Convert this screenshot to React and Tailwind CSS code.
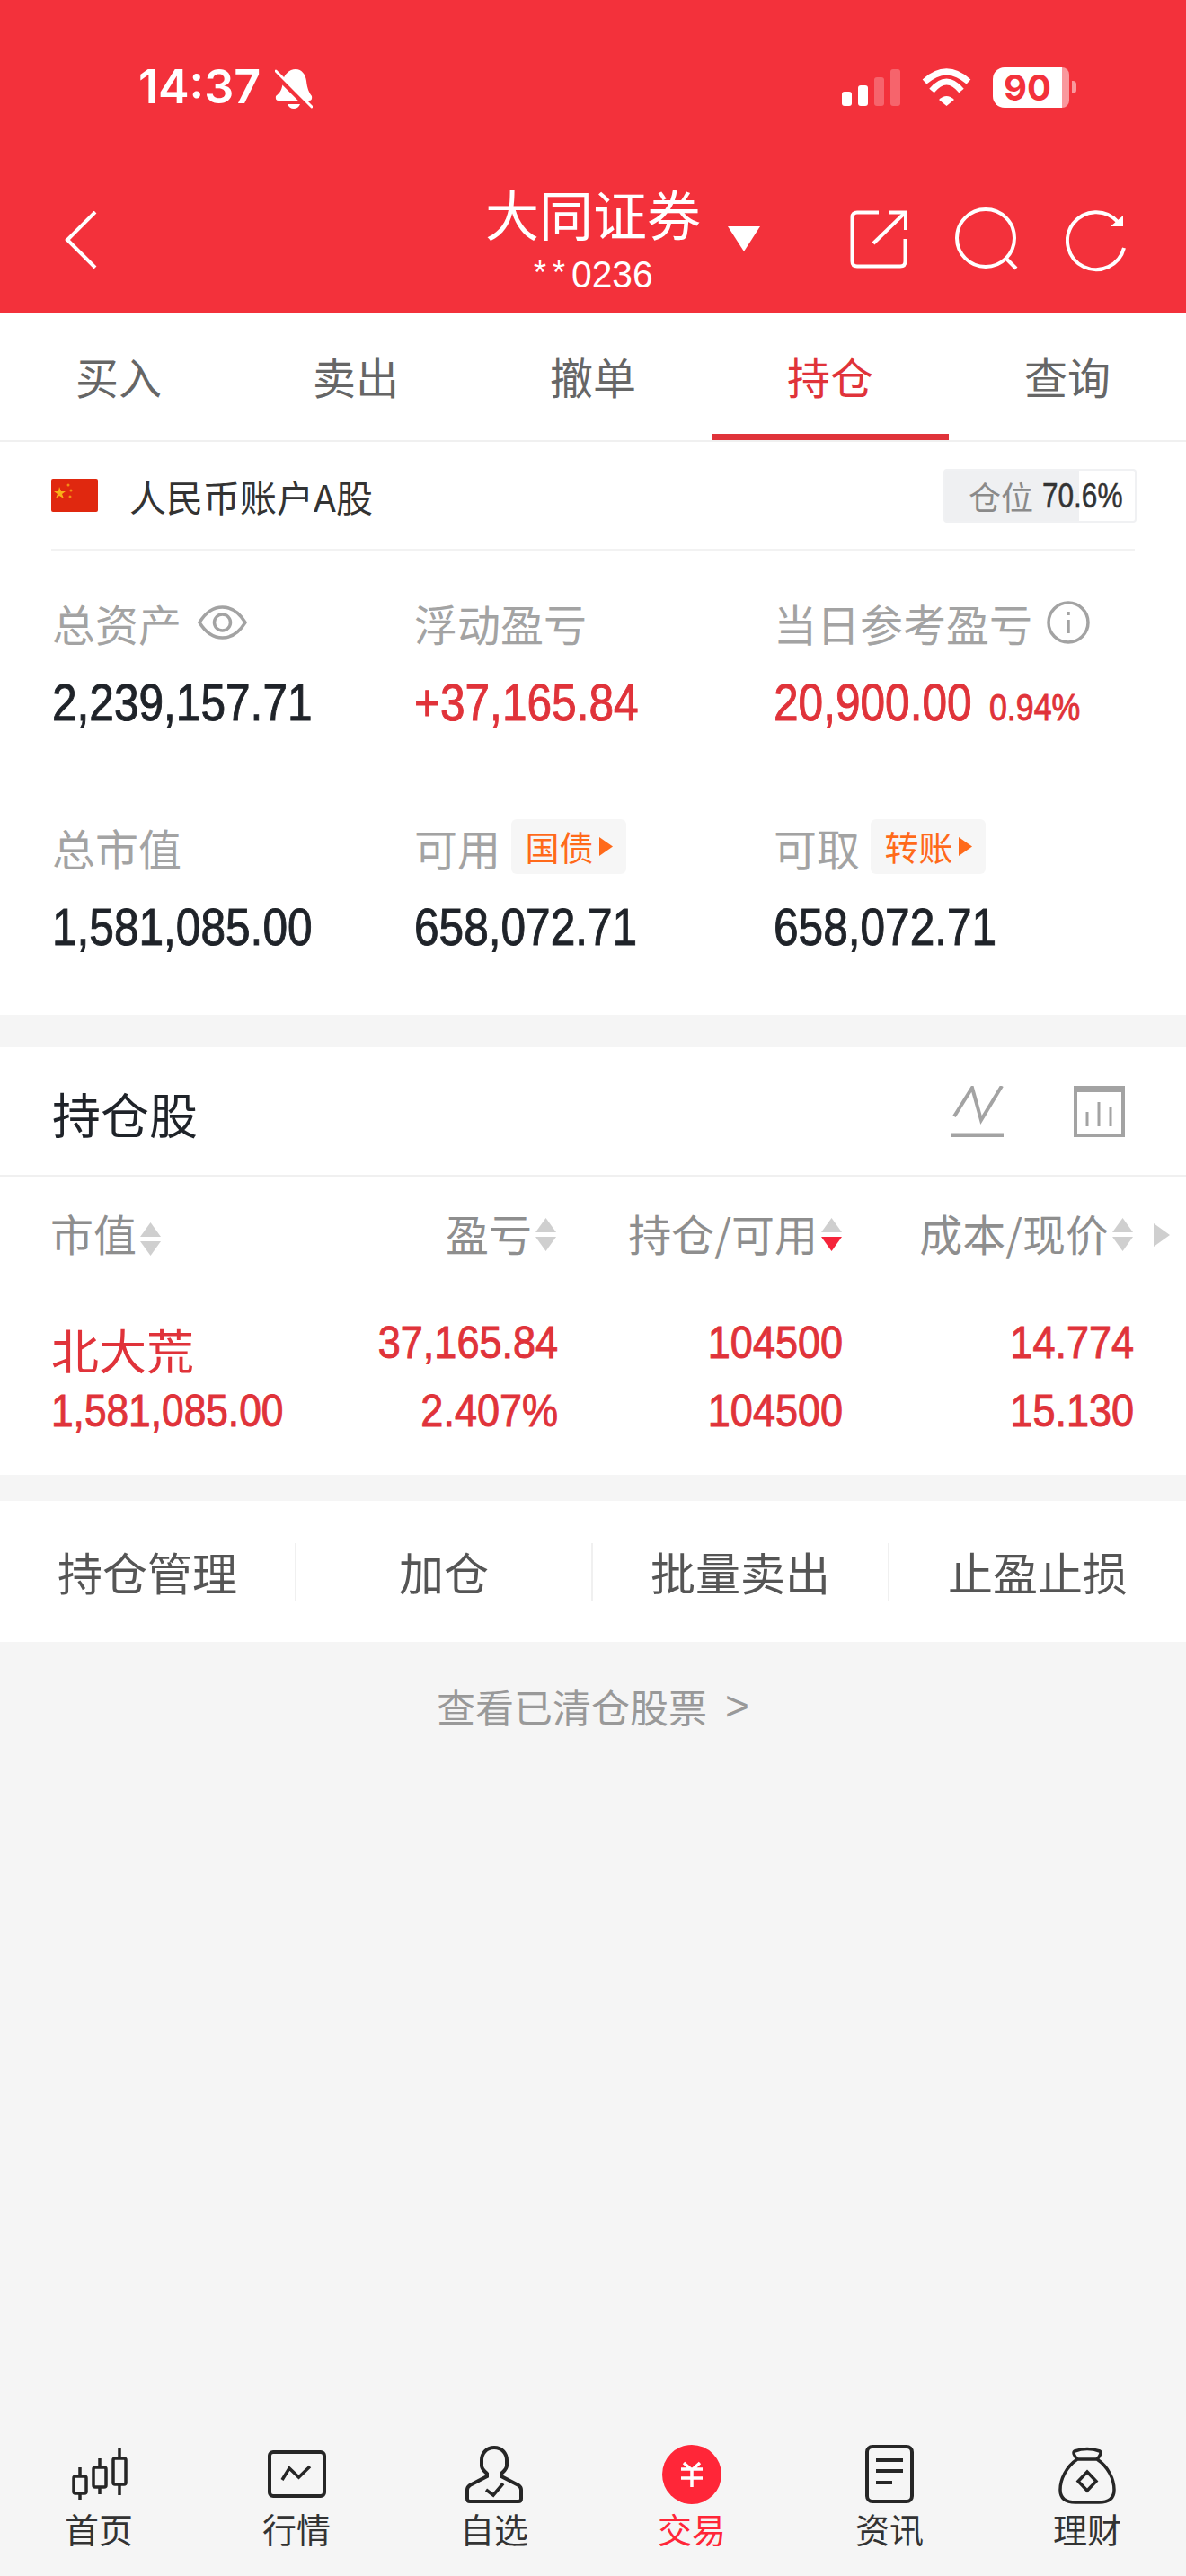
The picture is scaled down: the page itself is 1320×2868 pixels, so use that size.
const narrow = "[font-family:'Liberation_Sans',sans-serif] [-webkit-text-stroke:1px]";

const tabs = ['买入', '卖出', '撤单', '持仓', '查询'];

const actions = ['持仓管理', '加仓', '批量卖出', '止盈止损'];

function Triangle({ dir = 'up', color = '#cfcfcf' }) {
  return (
    <svg width="23" height="16" viewBox="0 0 23 16" className="block">
      <path d={dir === 'up' ? 'M11.5 0L23 16H0Z' : 'M0 0H23L11.5 16Z'} fill={color} />
    </svg>
  );
}

function Sort({ active }) {
  return (
    <span className="flex flex-col gap-[5px] ml-[4px]">
      <Triangle dir="up" />
      <Triangle dir="down" color={active ? '#f5243a' : '#cfcfcf'} />
    </span>
  );
}

function ColHead({ label, active }) {
  return (
    <div className="flex items-center justify-end h-[48px]">
      <span className="-mt-[4px] text-[48px] leading-[48px] text-[#8e8e8e] whitespace-nowrap">{label}</span>
      <Sort active={active} />
    </div>
  );
}

function Tag({ text }) {
  return (
    <span className="flex items-center justify-center ml-[12px] -mt-[2px] w-[128px] h-[61px] rounded-[6px] bg-[#f6f6f6]">
      <span className="text-[38px] leading-[40px] text-[#ff6a1a]">{text}</span>
      <svg width="15" height="21" viewBox="0 0 15 21" className="ml-[6px]">
        <path d="M0 0L15 10.5L0 21Z" fill="#ff6a1a" />
      </svg>
    </span>
  );
}

function Stat({ label, after, value, color = 'text-[#1f2329]', extra }) {
  return (
    <div>
      <div className="flex items-center h-[48px] -mt-[4px]">
        <span className="text-[48px] leading-[48px] text-[#a3a3a3] whitespace-nowrap">{label}</span>
        {after}
      </div>
      <div className="flex items-baseline mt-[41px] h-[48px]">
        <span className={`${narrow} inline-block origin-left scale-x-[0.855] text-[58px] leading-[48px] whitespace-nowrap ${color}`}>{value}</span>
        {extra}
      </div>
    </div>
  );
}

function NavItem({ label, active, children }) {
  return (
    <div className="flex flex-col items-center">
      <svg width="66" height="66" viewBox="0 0 66 66" fill="none" stroke="#262626" strokeWidth="4" className="mt-[22px]">
        {children}
      </svg>
      <span className={`mt-[9px] text-[38px] leading-[36px] ${active ? 'text-[#ff2638]' : 'text-[#333333]'}`}>{label}</span>
    </div>
  );
}

export default function App() {
  return (
    <div className="w-[1320px] h-[2868px] flex flex-col overflow-hidden bg-[#f5f5f5] [font-family:'Noto_Sans_CJK_SC',sans-serif]">
      {/* red header */}
      <div className="bg-[#f3313b] h-[348px] text-white">
        <div className="flex items-center h-[194px]">
          <span className="ml-[154px] [font-family:Inter,sans-serif] font-semibold text-[52px] leading-[60px]">14:37</span>
          <svg width="42" height="45" viewBox="0 0 42 45" className="ml-[16px] mt-[2px]" fill="#fff">
            <path d="M23 1C30 1 34 7 35 14C36 23 38 27 41 31Q42 36 38 36H4Q0 36 1 31C6 27 8 24 9 14C10 7 16 1 23 1Z" />
            <path d="M14 40H28Q26 45 21 45Q16 45 14 40Z" />
            <path d="M0 6L38 44" stroke="#f3313b" strokeWidth="6" />
            <path d="M1 3L41 43" stroke="#fff" strokeWidth="3" strokeLinecap="round" />
          </svg>
          <div className="flex items-end gap-[7px] ml-auto h-[41px] mt-[1px]">
            <span className="w-[11px] h-[16px] rounded-[3px] bg-white" />
            <span className="w-[11px] h-[23px] rounded-[3px] bg-white" />
            <span className="w-[11px] h-[32px] rounded-[3px] bg-white/25" />
            <span className="w-[11px] h-[41px] rounded-[3px] bg-white/25" />
          </div>
          <svg width="57" height="42" viewBox="0 0 57 42" fill="none" stroke="#fff" strokeWidth="7" className="ml-[23px]">
            <path d="M4 15Q28.5 -7 53 15" />
            <path d="M12 25Q28.5 5 45 25" />
            <path d="M20 35Q28.5 27 37 35L28.5 42Z" fill="#fff" stroke="none" />
          </svg>
          <div className="flex items-center ml-[23px] mr-[122px]">
            <div className="flex h-[45px] w-[85px]">
              <span className="flex items-center justify-center w-[77px] rounded-l-[13px] bg-white text-[#f3313b] [font-family:Inter,sans-serif] font-bold text-[40px] leading-[45px]">90</span>
              <span className="flex-1 rounded-r-[13px] bg-white/50" />
            </div>
            <span className="ml-[3px] w-[5px] h-[14px] rounded-r-[4px] bg-white/50" />
          </div>
        </div>
        <div className="flex items-start h-[154px]">
          <svg width="36" height="64" viewBox="0 0 36 64" fill="none" stroke="#fff" strokeWidth="4" className="ml-[72px] mt-[41px]">
            <path d="M34 1L3 32L34 63" />
          </svg>
          <div className="flex flex-col items-center ml-[431px] mt-[13px] w-[242px]">
            <span className="text-[60px] leading-[60px] whitespace-nowrap">大同证券</span>
            <span className="flex items-start mt-[19px] h-[40px] [font-family:'Liberation_Sans',sans-serif]">
              <span className="text-[36px] leading-[36px] tracking-[7px]">**</span>
              <span className="inline-block origin-left scale-x-[0.97] text-[42px] leading-[40px] w-[90px]">0236</span>
            </span>
          </div>
          <svg width="36" height="28" viewBox="0 0 36 28" className="ml-[29px] mt-[58px]">
            <path d="M0 0H36L18 28Z" fill="#fff" />
          </svg>
          <svg width="64" height="65" viewBox="0 0 64 65" fill="none" stroke="#fff" strokeWidth="4" className="ml-[100px] mt-[40px]">
            <path d="M32 2.5H8Q2.5 2.5 2.5 8V57Q2.5 62.5 8 62.5H56Q61.5 62.5 61.5 57V32" />
            <path d="M26 37L61 3" />
            <path d="M43 2.5H62V22" />
          </svg>
          <svg width="72" height="72" viewBox="0 0 72 72" fill="none" stroke="#fff" strokeWidth="4" className="ml-[53px] mt-[37px]">
            <circle cx="34" cy="34" r="32" />
            <path d="M57 57L68 68" />
          </svg>
          <svg width="68" height="70" viewBox="0 0 68 70" fill="none" stroke="#fff" strokeWidth="4" className="ml-[51px] mt-[39px]">
            <path d="M65 43A32 32 0 1 1 58 14" />
            <path d="M64 7V19H50Z" fill="#fff" stroke="none" />
          </svg>
        </div>
      </div>

      {/* tabs */}
      <div className="grid grid-cols-5 h-[144px] bg-white border-b-2 border-[#f0f0f0]">
        {tabs.map((t, i) => (
          <div key={t} className={`flex items-center justify-center ${i === 3 ? 'shadow-[inset_0_-7px_0_#e0333a] text-[#e0333a]' : 'text-[#666666]'}`}>
            <span className="-mt-[2px] text-[48px] leading-[56px]">{t}</span>
          </div>
        ))}
      </div>

      {/* account + stats */}
      <div className="bg-white">
        <div className="flex items-center mx-[57px] h-[121px] border-b-2 border-[#f2f2f2]">
          <svg width="52" height="37" viewBox="0 0 52 37" className="rounded-[2px]">
            <rect width="52" height="37" fill="#e0280f" />
            <path d="M9 9l2 5 5 0-4 3 2 5-5-3-4 3 2-5-4-3 5 0z" fill="#ffd21a" opacity="0.8" />
            <circle cx="19" cy="7" r="1.5" fill="#ffd21a" opacity="0.6" />
            <circle cx="22" cy="13" r="1.5" fill="#ffd21a" opacity="0.6" />
            <circle cx="21" cy="20" r="1.5" fill="#ffd21a" opacity="0.6" />
          </svg>
          <span className="ml-[35px] text-[41px] leading-[48px] text-[#333333]">人民币账户A股</span>
          <div className="flex items-center ml-auto -mr-[2px] w-[215px] h-[60px] pl-[26px] rounded-[4px] border-2 border-[#f0f1f3] bg-[linear-gradient(90deg,#eff0f2_70.6%,#ffffff_70.6%)]">
            <span className="shrink-0 text-[36px] leading-[40px] text-[#8a8a8a]">仓位</span>
            <span className="shrink-0 inline-block origin-left scale-x-[0.83] ml-[10px] whitespace-nowrap text-[38px] leading-[40px] text-[#333333] [font-family:'Liberation_Sans',sans-serif] [-webkit-text-stroke:0.6px]">70.6%</span>
          </div>
        </div>
        <div className="grid grid-cols-[403px_400px_1fr] gap-y-[117px] pl-[58px] pt-[60px] pb-[74px]">
          <Stat
            label="总资产"
            value="2,239,157.71"
            after={
              <svg width="55" height="40" viewBox="0 0 55 40" fill="none" stroke="#a3a3a3" strokeWidth="3.5" className="ml-[18px]">
                <path d="M2 20C10 7 18 3 27.5 3C37 3 45 7 53 20C45 33 37 37 27.5 37C18 37 10 33 2 20Z" />
                <circle cx="27.5" cy="20" r="9" />
              </svg>
            }
          />
          <Stat label="浮动盈亏" value="+37,165.84" color="text-[#e0333a]" />
          <Stat
            label="当日参考盈亏"
            value="20,900.00"
            color="text-[#e0333a]"
            after={
              <svg width="48" height="48" viewBox="0 0 48 48" fill="none" stroke="#a3a3a3" strokeWidth="3.5" className="ml-[16px]">
                <circle cx="24" cy="24" r="22" />
                <path d="M24 21V36" />
                <path d="M24 12V16" />
              </svg>
            }
            extra={<span className={`${narrow} inline-block origin-left scale-x-[0.85] -ml-[18px] text-[42px] leading-[48px] text-[#e0333a]`}>0.94%</span>}
          />
          <Stat label="总市值" value="1,581,085.00" />
          <Stat label="可用" value="658,072.71" after={<Tag text="国债" />} />
          <Stat label="可取" value="658,072.71" after={<Tag text="转账" />} />
        </div>
      </div>

      {/* holdings */}
      <div className="mt-[36px] bg-white">
        <div className="flex items-center h-[144px] pl-[58px] border-b-2 border-[#f0f0f0]">
          <span className="text-[54px] leading-[60px] mt-[6px] text-[#1f2329]">持仓股</span>
          <svg width="58" height="57" viewBox="0 0 58 57" fill="none" stroke="#a3a3a3" strokeWidth="4" className="ml-auto">
            <path d="M3 34L23 2L33 38L56 0" />
            <path d="M0 55H58" strokeWidth="5" />
          </svg>
          <svg width="57" height="57" viewBox="0 0 57 57" fill="none" stroke="#a3a3a3" strokeWidth="4" className="ml-[78px] mr-[68px]">
            <rect x="2" y="2" width="53" height="53" />
            <path d="M0 5H57" />
            <path d="M15 29V45M28 18V45M41 23V45" strokeWidth="3" />
          </svg>
        </div>
        <div className="relative grid grid-cols-[243px_320px_318px_324px] pl-[56px] pt-[40px]">
          <div className="flex items-center h-[48px]">
            <span className="-mt-[4px] text-[48px] leading-[48px] text-[#8e8e8e]">市值</span>
            <span className="mt-[10px]"><Sort /></span>
          </div>
          <ColHead label="盈亏" />
          <ColHead label="持仓/可用" active />
          <ColHead label="成本/现价" />
          <svg width="18" height="26" viewBox="0 0 18 26" className="absolute left-[1284px] top-[52px]">
            <path d="M0 0L18 13L0 26Z" fill="#cfcfcf" />
          </svg>
        </div>
        <div className={`grid grid-cols-[243px_321px_317px_324px] grid-rows-[76px_40px] pl-[57px] mt-[77px] pb-[51px] text-[#e0333a] text-[50px] leading-[40px] text-right ${narrow}`}>
          <span className="[font-family:'Noto_Sans_CJK_SC',sans-serif] [-webkit-text-stroke:0px] text-left text-[53px] leading-[52px] mt-[1px]">北大荒</span>
          <span className="origin-right scale-x-[0.9]">37,165.84</span>
          <span className="origin-right scale-x-[0.9]">104500</span>
          <span className="origin-right scale-x-[0.9]">14.774</span>
          <span className="origin-left scale-x-[0.885] text-left whitespace-nowrap">1,581,085.00</span>
          <span className="origin-right scale-x-[0.9]">2.407%</span>
          <span className="origin-right scale-x-[0.9]">104500</span>
          <span className="origin-right scale-x-[0.9]">15.130</span>
        </div>
      </div>

      {/* actions */}
      <div className="grid grid-cols-4 items-center h-[157px] mt-[29px] bg-white">
        {actions.map((a, i) => (
          <div key={a} className={`flex items-center justify-center h-[64px] ${i < 3 ? 'border-r-2 border-[#f0f0f0]' : ''}`}>
            <span className="-mt-[2px] text-[50px] leading-[56px] text-[#555555]">{a}</span>
          </div>
        ))}
      </div>

      <div className="flex items-center justify-center mt-[47px] text-[43px] leading-[48px] text-[#999999]">
        <span>查看已清仓股票</span>
        <span className="ml-[20px] [font-family:'Liberation_Sans',sans-serif] text-[46px]">&gt;</span>
      </div>

      {/* bottom nav */}
      <div className="grid grid-cols-6 h-[168px] mt-auto">
        <NavItem label="首页">
          <g strokeWidth="3.5">
            <path d="M12 25V35M12 54V61M34 15V25M34 47V55M56 4V15M56 44V56" />
            <rect x="5" y="35" width="14" height="19" rx="2" />
            <rect x="27" y="25" width="14" height="22" rx="2" />
            <rect x="49" y="15" width="14" height="29" rx="2" />
          </g>
        </NavItem>
        <NavItem label="行情">
          <rect x="3" y="8" width="61" height="49" rx="4" />
          <path d="M17 39L25 26L35.5 36L48 24" strokeWidth="3.5" />
        </NavItem>
        <NavItem label="自选">
          <path d="M33 3C24 3 19 10 19 17V23C19 27 22 29 25 32V35L6 45Q3 47 3 50V60Q3 63 6 63H60Q63 63 63 60V50Q63 47 60 45L41 35V32C44 29 47 27 47 23V17C47 10 42 3 33 3Z" />
          <path d="M24 50L32 56L43 43" strokeWidth="3.5" />
        </NavItem>
        <NavItem label="交易" active>
          <circle cx="33" cy="33" r="33" fill="#ff2638" stroke="none" />
          <path d="M24 20L33 28L42 20M21 27H45M21 37H45M33 27V47" stroke="#fff" strokeWidth="3.5" />
        </NavItem>
        <NavItem label="资讯">
          <rect x="8" y="2" width="50" height="61" rx="6" />
          <path d="M18 17H48M18 29H48M18 42H36" />
        </NavItem>
        <NavItem label="理财">
          <path d="M22 16Q16 9 19 7Q33 2 47 7Q50 9 44 16" strokeWidth="3.5" />
          <path d="M22 16C10 24 3 38 3 50C3 60 10 64 20 64H46C56 64 63 60 63 50C63 38 56 24 44 16Z" strokeWidth="3.5" />
          <path d="M33 30L43 40.5L33 51L23 40.5Z" strokeWidth="3.5" />
        </NavItem>
      </div>
    </div>
  );
}
